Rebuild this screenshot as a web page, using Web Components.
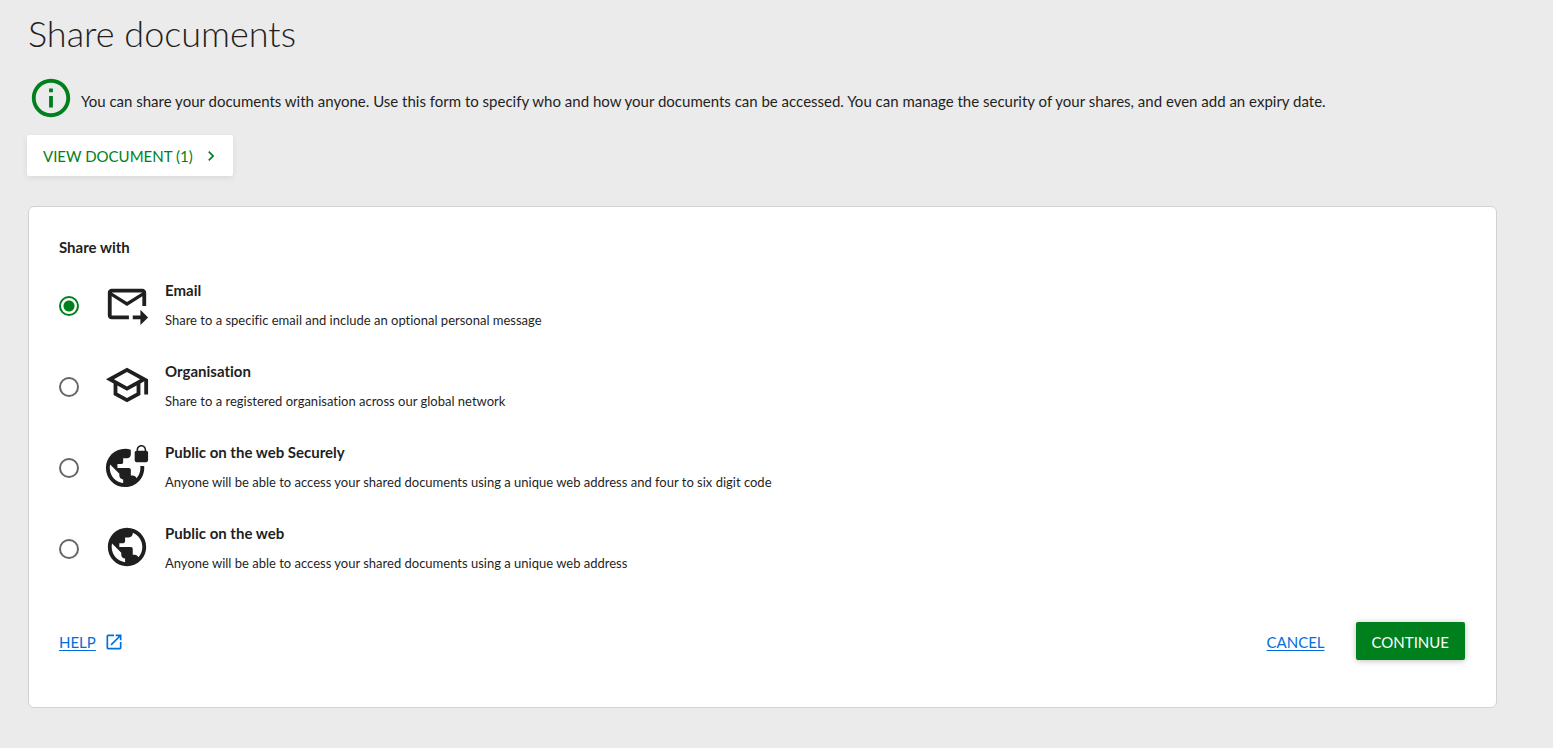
<!DOCTYPE html>
<html lang="en">
<head>
<meta charset="utf-8">
<title>Share documents</title>
<style>
  html { background: #ebebeb; }
  body { margin: 0; font: 15px/24px Lato, "Open Sans", sans-serif; font-variant-ligatures: none; color: #1f1f1f; }
</style>
</head>
<body>
<share-page></share-page>

<script>
const ICONS = {
  info: 'M11 7h2v2h-2zm0 4h2v6h-2zm1-9C6.48 2 2 6.48 2 12s4.48 10 10 10 10-4.48 10-10S17.52 2 12 2zm0 18c-4.41 0-8-3.59-8-8s3.59-8 8-8 8 3.59 8 8-3.59 8-8 8z',
  chevron: 'M10 6L8.59 7.41 13.17 12l-4.58 4.59L10 18l6-6z',
  email: 'M20 4H4c-1.1 0-2 .9-2 2v12c0 1.1.9 2 2 2h9v-2H4V8l8 5 8-5v5h2V6c0-1.1-.9-2-2-2zm-8 7L4 6h16l-8 5zm7 4l4 4-4 4v-3h-4v-2h4v-3z',
  school: 'M12 3 1 9l4 2.18v6L12 21l7-3.82v-6l2-1.09V17h2V9L12 3zm6.82 6L12 12.72 5.18 9 12 5.28 18.82 9zM17 15.99l-5 2.73-5-2.73v-3.72L12 15l5-2.73v3.72z',
  lock: 'M22 4v-.5C22 2.12 20.88 1 19.5 1S17 2.12 17 3.5V4c-.55 0-1 .45-1 1v4c0 .55.45 1 1 1h5c.55 0 1-.45 1-1V5c0-.55-.45-1-1-1zm-.8 0h-3.4v-.5c0-.94.76-1.7 1.7-1.7s1.7.76 1.7 1.7V4zm-2.28 8c.04.33.08.66.08 1 0 2.08-.8 3.97-2.1 5.39-.26-.81-1-1.39-1.9-1.39h-1v-3c0-.55-.45-1-1-1H7v-2h2c.55 0 1-.45 1-1V8h2c1.1 0 2-.9 2-2V3.46c-.95-.3-1.95-.46-3-.46C5.48 3 1 7.48 1 13s4.48 10 10 10 10-4.48 10-10c0-.34-.02-.67-.05-1h-2.03zM10 20.93c-3.95-.49-7-3.85-7-7.93 0-.62.08-1.21.21-1.79L8 16v1c0 1.1.9 2 2 2v1.93z',
  globe: 'M12 2C6.48 2 2 6.48 2 12s4.48 10 10 10 10-4.48 10-10S17.52 2 12 2zm-1 17.93c-3.95-.49-7-3.85-7-7.93 0-.62.08-1.21.21-1.79L9 15v1c0 1.1.9 2 2 2v1.93zm6.9-2.54c-.26-.81-1-1.39-1.9-1.39h-1v-3c0-.55-.45-1-1-1H8v-2h2c.55 0 1-.45 1-1V7h2c1.1 0 2-.9 2-2v-.41c2.93 1.19 5 4.06 5 7.41 0 2.08-.8 3.97-2.1 5.39z',
  launch: 'M19 19H5V5h7V3H5c-1.11 0-2 .9-2 2v14c0 1.1.89 2 2 2h14c1.1 0 2-.9 2-2v-7h-2v7zM14 3v2h3.59l-9.83 9.83 1.41 1.41L19 6.41V10h2V3h-7z'
};

class UiIcon extends HTMLElement {
  connectedCallback() {
    if (this.shadowRoot) return;
    this.attachShadow({ mode: 'open' }).innerHTML = `
      <style>
        :host { display: block; flex: none; width: var(--icon-size, 46px); height: var(--icon-size, 46px); }
        svg { display: block; width: 100%; height: 100%; fill: currentColor; }
      </style>
      <svg viewBox="0 0 24 24" aria-hidden="true"><path d="${ICONS[this.getAttribute('name')]}"/></svg>`;
  }
}
customElements.define('ui-icon', UiIcon);

class UiButton extends HTMLElement {
  connectedCallback() {
    if (this.shadowRoot) return;
    this.attachShadow({ mode: 'open' }).innerHTML = `
      <style>
        :host { display: block; flex: none; }
        button { display: flex; align-items: center; gap: 8px; margin: 0; height: 41px; padding: 1px 12px 0 16px;
          border: 0; border-radius: 2px; font: inherit; color: #00801c; background: #fff;
          box-shadow: 0 2px 6px rgba(0,0,0,.08); cursor: pointer; }
        :host([primary]) button { height: 38px; padding: 2px 16px 0; color: #fff; background: #00801c;
          box-shadow: 0 1px 6px rgba(0,0,0,.25); }
      </style>
      <button type="button"><slot></slot></button>`;
  }
}
customElements.define('ui-button', UiButton);

class UiLink extends HTMLElement {
  connectedCallback() {
    if (this.shadowRoot) return;
    this.attachShadow({ mode: 'open' }).innerHTML = `
      <style>
        :host { display: block; }
        a { display: flex; align-items: center; gap: 8px; padding-top: 2px; color: #006fdc; text-decoration: none; }
        .text { text-decoration: underline; text-underline-offset: 2px; }
      </style>
      <a href="#"><span class="text"><slot></slot></span><slot name="icon"></slot></a>`;
  }
}
customElements.define('ui-link', UiLink);

class ShareOptions extends HTMLElement {
  connectedCallback() {
    if (this.shadowRoot) return;
    const options = [
      ['email', 'Email', 'Share to a specific email and include an optional personal message'],
      ['school', 'Organisation', 'Share to a registered organisation across our global network'],
      ['lock', 'Public on the web Securely', 'Anyone will be able to access your shared documents using a unique web address and four to six digit code'],
      ['globe', 'Public on the web', 'Anyone will be able to access your shared documents using a unique web address']
    ];
    this.attachShadow({ mode: 'open' }).innerHTML = `
      <style>
        :host { display: block; }
        fieldset { margin: 0; padding: 0; border: 0; min-width: 0; }
        legend { padding: 0; font-weight: 700; margin-bottom: 20px; }
        .options { display: grid; gap: 27px; }
        label { display: flex; align-items: center; height: 54px; cursor: pointer; }
        input { appearance: none; flex: none; width: 20px; height: 20px; margin: 0 25px 0 0;
          border: 2px solid #666; border-radius: 50%; background: #fff; }
        input:checked { border-color: #00801c; background: radial-gradient(circle, #00801c 5px, #fff 6px); }
        ui-icon { margin-bottom: 4px; }
        .copy { display: grid; gap: 6px; margin: 0 0 2px 15px; }
        .name { font-weight: 700; }
        .detail { font-size: 13px; }
      </style>
      <fieldset>
        <legend>Share with</legend>
        <div class="options">
          ${options.map(([icon, name, detail], i) => `
            <label for="${icon}">
              <input type="radio" name="share" id="${icon}" ${i ? '' : 'checked'}>
              <ui-icon name="${icon}"></ui-icon>
              <span class="copy"><span class="name">${name}</span><span class="detail">${detail}</span></span>
            </label>`).join('')}
        </div>
      </fieldset>`;
  }
}
customElements.define('share-options', ShareOptions);

class UiCard extends HTMLElement {
  connectedCallback() {
    if (this.shadowRoot) return;
    this.attachShadow({ mode: 'open' }).innerHTML = `
      <style>
        :host { display: block; padding: 28px 31px 47px 30px; background: #fff; border: 1px solid #d2d2d2; border-radius: 6px; }
        footer { display: flex; align-items: center; justify-content: space-between; margin-top: 46px; }
        .actions { display: flex; align-items: center; gap: 31px; }
      </style>
      <slot></slot>
      <footer><slot name="help"></slot><div class="actions"><slot name="actions"></slot></div></footer>`;
  }
}
customElements.define('ui-card', UiCard);

class SharePage extends HTMLElement {
  connectedCallback() {
    if (this.shadowRoot) return;
    this.attachShadow({ mode: 'open' }).innerHTML = `
      <style>
        :host { display: block; padding: 9px 56px 40px 28px; }
        h1 { margin: 0; font-size: 36px; line-height: 48px; font-weight: 300; }
        .intro { display: flex; align-items: center; gap: 7px; margin-top: 18px; }
        .intro ui-icon { color: #00801c; }
        .intro p { margin: 6px 0 0; }
        .view { display: flex; margin: 14px 0 30px -1px; }
        .view ui-icon { --icon-size: 20px; }
        .help { --icon-size: 20px; }
      </style>
      <main>
        <h1>Share documents</h1>
        <div class="intro">
          <ui-icon name="info"></ui-icon>
          <p>You can share your documents with anyone. Use this form to specify who and how your documents can be accessed. You can manage the security of your shares, and even add an expiry date.</p>
        </div>
        <div class="view"><ui-button>VIEW DOCUMENT (1)<ui-icon name="chevron"></ui-icon></ui-button></div>
        <ui-card>
          <share-options></share-options>
          <ui-link class="help" slot="help">HELP<ui-icon slot="icon" name="launch"></ui-icon></ui-link>
          <ui-link slot="actions">CANCEL</ui-link>
          <ui-button primary slot="actions">CONTINUE</ui-button>
        </ui-card>
      </main>`;
  }
}
customElements.define('share-page', SharePage);
</script>
</body>
</html>
